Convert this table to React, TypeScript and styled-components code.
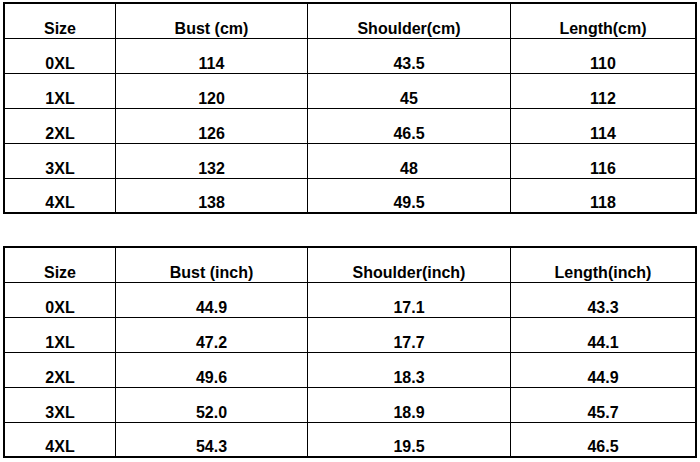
import React from "react";
import styled, { createGlobalStyle } from "styled-components";

const Global = createGlobalStyle`
  html, body {
    margin: 0;
    padding: 0;
    background: #ffffff;
  }
  body {
    font-family: "Liberation Sans", Arial, sans-serif;
  }
`;

const Page = styled.div`
  width: 700px;
  height: 462px;
  padding: 2px 0 0 3px;
  box-sizing: border-box;
  display: flex;
  flex-direction: column;
  gap: 32px;
`;

const Table = styled.table`
  border-collapse: separate;
  border-spacing: 0;
  border: 2px solid #000;
  table-layout: fixed;
  width: 694px;
`;

const Cell = styled.td<{ $last?: boolean; $lastRow?: boolean; $w: number }>`
  width: ${(p) => p.$w}px;
  height: ${(p) => (p.$lastRow ? 33 : 34)}px;
  padding: 0;
  box-sizing: content-box;
  vertical-align: bottom;
  text-align: center;
  font-size: 16px;
  line-height: 18px;
  font-weight: bold;
  color: #000;
  border-right: ${(p) => (p.$last ? "none" : "1px solid #000")};
  border-bottom: ${(p) => (p.$lastRow ? "none" : "1px solid #000")};
  white-space: nowrap;
`;

const widths = [110, 191, 202, 184];

type Data = { head: string[]; rows: string[][] };

const cm: Data = {
  head: ["Size", "Bust (cm)", "Shoulder(cm)", "Length(cm)"],
  rows: [
    ["0XL", "114", "43.5", "110"],
    ["1XL", "120", "45", "112"],
    ["2XL", "126", "46.5", "114"],
    ["3XL", "132", "48", "116"],
    ["4XL", "138", "49.5", "118"],
  ],
};

const inch: Data = {
  head: ["Size", "Bust (inch)", "Shoulder(inch)", "Length(inch)"],
  rows: [
    ["0XL", "44.9", "17.1", "43.3"],
    ["1XL", "47.2", "17.7", "44.1"],
    ["2XL", "49.6", "18.3", "44.9"],
    ["3XL", "52.0", "18.9", "45.7"],
    ["4XL", "54.3", "19.5", "46.5"],
  ],
};

function SizeTable({ data }: { data: Data }) {
  const all = [data.head, ...data.rows];
  return (
    <Table>
      <tbody>
        {all.map((row, ri) => (
          <tr key={ri}>
            {row.map((c, ci) => (
              <Cell
                key={ci}
                $w={widths[ci]}
                $last={ci === row.length - 1}
                $lastRow={ri === all.length - 1}
              >
                {c}
              </Cell>
            ))}
          </tr>
        ))}
      </tbody>
    </Table>
  );
}

export default function App() {
  return (
    <>
      <Global />
      <Page>
        <SizeTable data={cm} />
        <SizeTable data={inch} />
      </Page>
    </>
  );
}
